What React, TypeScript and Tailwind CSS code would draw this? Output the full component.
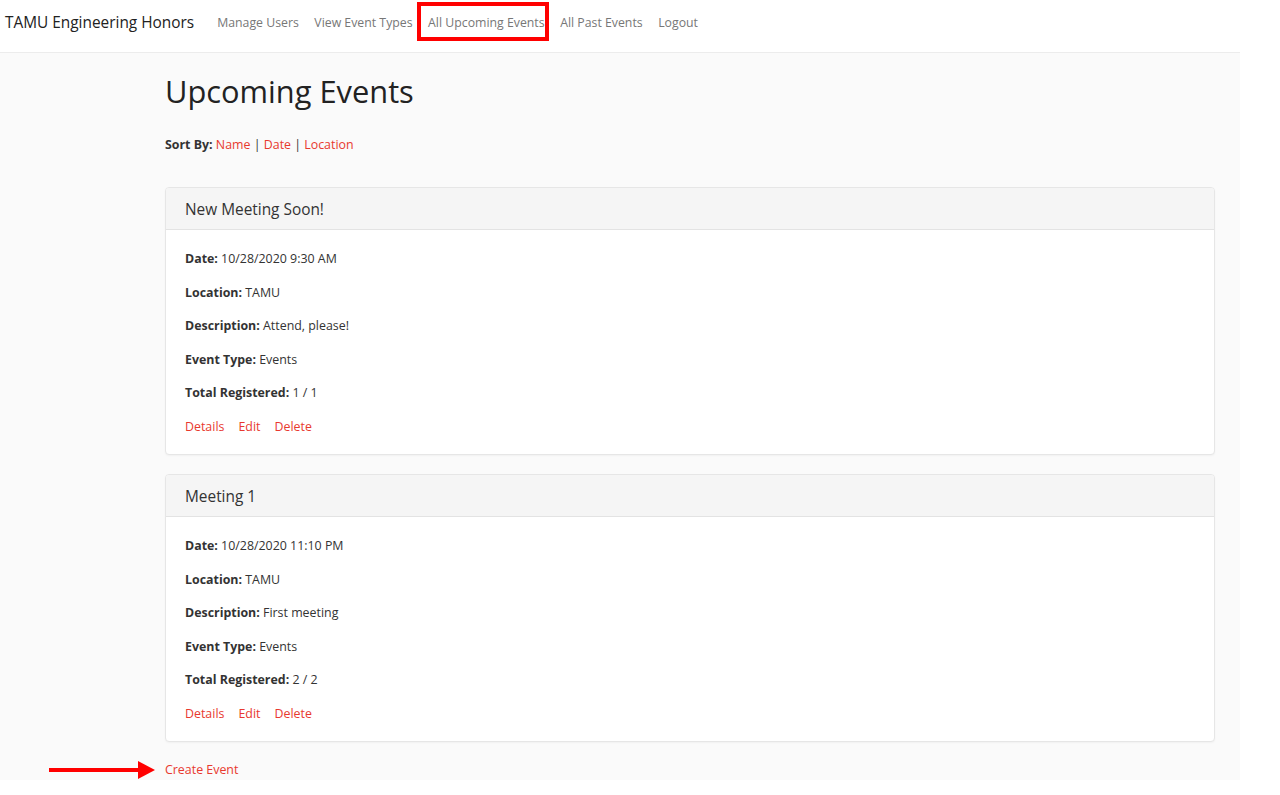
import React from 'react';

interface EventItem {
  title: string;
  date: string;
  location: string;
  description: string;
  eventType: string;
  registered: string;
}

const events: EventItem[] = [
  {
    title: 'New Meeting Soon!',
    date: '10/28/2020 9:30 AM',
    location: 'TAMU',
    description: 'Attend, please!',
    eventType: 'Events',
    registered: '1 / 1',
  },
  {
    title: 'Meeting 1',
    date: '10/28/2020 11:10 PM',
    location: 'TAMU',
    description: 'First meeting',
    eventType: 'Events',
    registered: '2 / 2',
  },
];

const navLinks = ['Manage Users', 'View Event Types', 'All Upcoming Events', 'All Past Events', 'Logout'];

const EventCard: React.FC<{ event: EventItem }> = ({ event }) => {
  const rows: [string, string][] = [
    ['Date:', event.date],
    ['Location:', event.location],
    ['Description:', event.description],
    ['Event Type:', event.eventType],
    ['Total Registered:', event.registered],
  ];

  return (
    <div className="bg-white border border-[#e6e6e6] rounded-[4px] shadow-[0_1px_2px_rgba(0,0,0,0.04)] overflow-hidden">
      <div className="h-[42px] bg-[#f5f5f5] border-b border-[#e3e3e3] px-[19px] pt-[2px] flex items-center">
        <h3 className="text-[15.4px] text-[#333]">{event.title}</h3>
      </div>
      <div className="px-[19px] pt-[19px] pb-[17px] flex flex-col gap-[13.6px] text-[12.4px] leading-[20px] text-[#333]">
        {rows.map(([label, value]) => (
          <p key={label}>
            <span className="font-bold">{label}</span> {value}
          </p>
        ))}
        <div className="flex gap-[14px] text-[#e8392f]">
          <a href="#">Details</a>
          <a href="#">Edit</a>
          <a href="#">Delete</a>
        </div>
      </div>
    </div>
  );
};

export default function App() {
  return (
    <div className="w-[1240px] bg-[#fafafa] font-['Open_Sans',sans-serif] relative">
      <nav className="h-[53px] bg-white border-b border-[#ececec] flex items-start pt-[14px]">
        <span className="ml-[5px] text-[15.4px] leading-[18px] text-[#222] mr-[23px]">TAMU Engineering Honors</span>
        <div className="flex gap-[15.5px] text-[12.3px] leading-[18px] text-[#777]">
          {navLinks.map((link) => (
            <a key={link} href="#" className="relative">
              {link}
              {link === 'All Upcoming Events' && (
                <span className="absolute left-[-11px] right-[-4px] top-[-12px] bottom-[-9px] border-[4px] border-[#ff0000]" />
              )}
            </a>
          ))}
        </div>
      </nav>

      <main className="pl-[165px] w-[1215px] pt-[19px]">
        <h1 className="text-[30.8px] leading-[38px] text-[#222]">Upcoming Events</h1>
        <p className="mt-[25px] text-[12.4px] leading-[20px] text-[#333]">
          <span className="font-bold">Sort By:</span>{' '}
          <a href="#" className="text-[#e8392f]">Name</a> | <a href="#" className="text-[#e8392f]">Date</a> |{' '}
          <a href="#" className="text-[#e8392f]">Location</a>
        </p>

        <div className="mt-[32px] flex flex-col gap-[19px]">
          {events.map((event) => (
            <EventCard key={event.title} event={event} />
          ))}
        </div>

        <div className="mt-[18px] text-[12.4px] leading-[20px] relative">
          <a href="#" className="text-[#e8392f]">Create Event</a>
          <svg className="absolute left-[-116px] top-[1px]" width="108" height="18" viewBox="0 0 108 18">
            <rect x="0" y="7" width="92" height="4" fill="#ff0000" />
            <polygon points="89,0 106,9 89,18" fill="#ff0000" />
          </svg>
        </div>
      </main>
    </div>
  );
}
